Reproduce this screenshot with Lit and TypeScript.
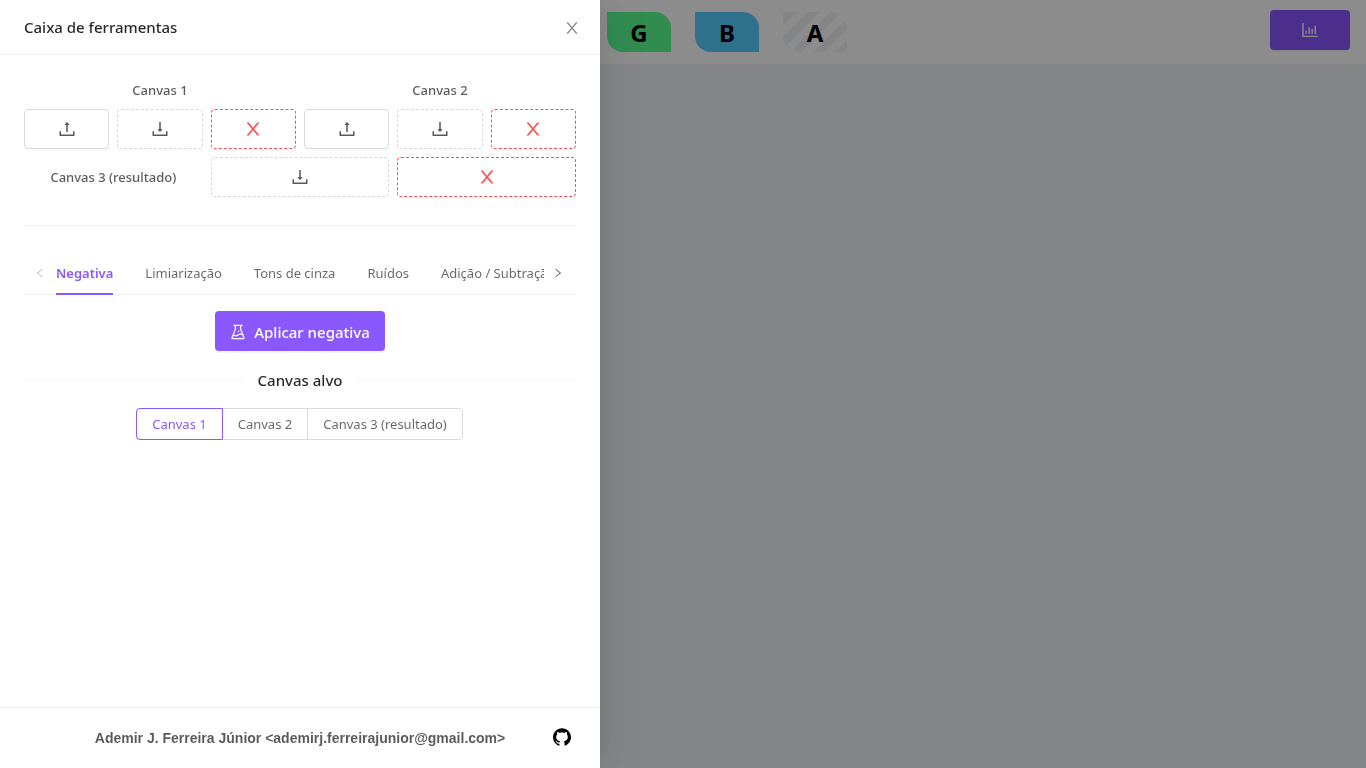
import { LitElement, html, css, svg } from "lit";
import { customElement, property, state } from "lit/decorators.js";
import { classMap } from "lit/directives/class-map.js";

const TRAY =
  "M878 626h-60c-4.4 0-8 3.6-8 8v154H214V634c0-4.4-3.6-8-8-8h-60c-4.4 0-8 3.6-8 8v198c0 17.7 14.3 32 32 32h684c17.7 0 32-14.3 32-32V634c0-4.4-3.6-8-8-8z";

const ICONS: Record<string, string> = {
  upload:
    "M400 317.7h73.9V656c0 4.4 3.6 8 8 8h60c4.4 0 8-3.6 8-8V317.7H624c6.7 0 10.4-7.7 6.3-12.9L518.3 163a8 8 0 00-12.6 0l-112 141.7c-4.1 5.3-.4 13 6.3 13z" + TRAY,
  download:
    "M505.7 661a8 8 0 0012.6 0l112-141.7c4.1-5.2.4-12.9-6.3-12.9h-74.1V168c0-4.4-3.6-8-8-8h-60c-4.4 0-8 3.6-8 8v338.3H400c-6.7 0-10.4 7.7-6.3 12.9l112 141.8z" + TRAY,
  close:
    "M563.8 512l262.5-312.9c4.4-5.2.7-13.1-6.1-13.1h-79.8c-4.7 0-9.2 2.1-12.3 5.7L511.6 449.8 295.1 191.7c-3-3.6-7.5-5.7-12.3-5.7H203c-6.8 0-10.5 7.9-6.1 13.1L459.4 512 196.9 824.9A7.95 7.95 0 00203 838h79.8c4.7 0 9.2-2.1 12.3-5.7l216.5-258.1 216.5 258.1c3 3.6 7.5 5.7 12.3 5.7h79.8c6.8 0 10.5-7.9 6.1-13.1L563.8 512z",
  left:
    "M724 218.3V141c0-6.7-7.7-10.4-12.9-6.3L260.3 486.8a31.86 31.86 0 000 50.3l450.8 352.1c5.3 4.1 12.9.4 12.9-6.3v-77.3c0-4.9-2.3-9.6-6.1-12.6l-360-281 360-281.1c3.8-3 6.1-7.7 6.1-12.6z",
  right:
    "M765.7 486.8L314.9 134.7A7.97 7.97 0 00302 141v77.3c0 4.9 2.3 9.6 6.1 12.6l360 281.1-360 281.1c-3.9 3-6.1 7.7-6.1 12.6V883c0 6.7 7.7 10.4 12.9 6.3l450.8-352.1a31.96 31.96 0 000-50.4z",
  chart:
    "M888 792H200V168c0-4.4-3.6-8-8-8h-56c-4.4 0-8 3.6-8 8v688c0 4.4 3.6 8 8 8h752c4.4 0 8-3.6 8-8v-56c0-4.4-3.6-8-8-8zm-600-80h56c4.4 0 8-3.6 8-8V560c0-4.4-3.6-8-8-8h-56c-4.4 0-8 3.6-8 8v144c0 4.4 3.6 8 8 8zm152 0h56c4.4 0 8-3.6 8-8V384c0-4.4-3.6-8-8-8h-56c-4.4 0-8 3.6-8 8v320c0 4.4 3.6 8 8 8zm152 0h56c4.4 0 8-3.6 8-8V462c0-4.4-3.6-8-8-8h-56c-4.4 0-8 3.6-8 8v242c0 4.4 3.6 8 8 8zm152 0h56c4.4 0 8-3.6 8-8V304c0-4.4-3.6-8-8-8h-56c-4.4 0-8 3.6-8 8v400c0 4.4 3.6 8 8 8z",
  experiment:
    "M512 472a40 40 0 1080 0 40 40 0 10-80 0zm367 352.9L696.3 352V178H768v-68H256v68h71.7v174L145 824.9c-2.8 7.4-4.3 15.2-4.3 23.1 0 35.3 28.7 64 64 64h614.6c7.9 0 15.7-1.5 23.1-4.3 33-12.7 49.4-49.8 36.6-82.8zM395.7 364.7V180h232.6v184.7L719.2 600c-20.7-5.3-42.1-8-63.9-8-61.2 0-119.2 21.5-165.3 60a188.78 188.78 0 01-121.3 43.9c-32.7 0-64.1-8.3-91.8-23.7l118.8-307.5zM210.5 844l41.7-107.8c35.7 18.1 75.4 27.8 116.6 27.8 61.2 0 119.2-21.5 165.3-60 33.9-28.2 76.3-43.9 121.3-43.9 35 0 68.4 9.5 97.6 27.1L813.5 844h-603z",
  github:
    "M511.6 76.3C264.3 76.2 64 276.4 64 523.5 64 718.9 189.3 885 363.8 946c23.5 5.9 19.9-10.8 19.9-22.2v-77.5c-135.7 15.9-141.2-73.9-150.3-88.9C215 726 171.5 718 184.5 703c30.9-15.9 62.4 4 98.9 57.9 26.4 39.1 77.9 32.5 104 26 5.7-23.5 17.9-44.5 34.7-60.8-140.6-25.2-199.2-111-199.2-213 0-49.5 16.3-95 48.3-131.7-20.4-60.5 1.9-112.3 4.9-120 58.1-5.2 118.5 41.6 123.2 45.3 33-8.9 70.7-13.6 112.9-13.6 42.4 0 80.2 4.9 113.5 13.9 11.3-8.6 67.3-48.8 121.3-43.9 2.9 7.7 24.7 58.3 5.5 118 32.4 36.8 48.9 82.7 48.9 132.3 0 102.2-59 188.1-200 212.9a127.5 127.5 0 0138.1 91v112.5c.8 9 0 17.9 15 17.9 177.1-59.7 304.6-227 304.6-424.1 0-247.2-200.4-447.3-447.5-447.3z",
};

@customElement("ui-icon")
export class UiIcon extends LitElement {
  @property() name = "close";

  static styles = css`
    :host {
      display: inline-flex;
    }
    svg {
      width: 1em;
      height: 1em;
      fill: currentColor;
    }
  `;

  render() {
    return html`<svg viewBox="64 64 896 896" aria-hidden="true">${svg`<path d=${ICONS[this.name]}></path>`}</svg>`;
  }
}

const TABS = ["Negativa", "Limiarização", "Tons de cinza", "Ruídos", "Adição / Subtração"];
const CANVASES = ["Canvas 1", "Canvas 2", "Canvas 3 (resultado)"];

@customElement("app-root")
export class AppRoot extends LitElement {
  @state() private tab = 0;
  @state() private target = 0;

  static styles = css`
    :host {
      --primary: #8b57ff;
      --danger: #ff4d4f;
      --text: rgba(0, 0, 0, 0.65);
      --soft: rgba(0, 0, 0, 0.6);
      --heading: rgba(0, 0, 0, 0.85);
      --border: #d9d9d9;
      --split: #f0f0f0;
      display: block;
      min-height: 100vh;
      background: #f0f2f5;
      color: var(--text);
      font: 13px/22px "Noto Sans", "Open Sans", sans-serif;
    }
    * {
      box-sizing: border-box;
    }
    button {
      font: inherit;
      color: inherit;
      cursor: pointer;
      padding: 0;
      margin: 0;
      border: 0;
      background: none;
    }

    .topbar {
      display: grid;
      grid-template-columns: 1fr auto 1fr;
      align-items: center;
      height: 64px;
      padding: 0 16px;
      background: #fff;
    }
    .channels {
      display: flex;
      gap: 24px;
      grid-column: 2;
    }
    .channel {
      width: 64px;
      height: 40px;
      border-radius: 0 16px;
      color: #000;
      font-size: 24px;
      line-height: 42px;
      font-weight: 700;
      text-align: center;
    }
    .red { background: #ff5c5c; }
    .green { background: #5aff92; }
    .blue { background: #57ccff; }
    .alpha {
      background: repeating-linear-gradient(-45deg, #f0f2f5 0 8px, #fff 8px 16px);
    }
    .stats {
      justify-self: end;
      width: 80px;
      height: 40px;
      margin-bottom: 4px;
      border-radius: 4px;
      background: var(--primary);
      color: #fff;
      font-size: 18px;
      display: grid;
      place-items: center;
      box-shadow: 0 2px 0 rgba(0, 0, 0, 0.04);
    }

    .mask {
      position: fixed;
      inset: 0;
      background: rgba(0, 0, 0, 0.45);
    }
    .drawer {
      position: fixed;
      inset: 0 auto 0 0;
      width: 600px;
      max-width: 100%;
      display: flex;
      flex-direction: column;
      background: #fff;
      box-shadow: 6px 0 16px -8px rgba(0, 0, 0, 0.08), 9px 0 28px rgba(0, 0, 0, 0.05),
        12px 0 48px 16px rgba(0, 0, 0, 0.03);
    }
    .head {
      display: flex;
      align-items: center;
      justify-content: space-between;
      padding: 16px 20px 16px 24px;
      border-bottom: 1px solid var(--split);
    }
    .title {
      margin: 0;
      font-size: 15px;
      line-height: 22px;
      font-weight: 500;
      color: var(--heading);
    }
    .close {
      display: flex;
      padding-top: 2px;
      font-size: 16px;
      color: rgba(0, 0, 0, 0.45);
    }
    .body {
      flex: 1;
      overflow: auto;
      padding: 24px;
    }

    .files {
      display: grid;
      grid-template-columns: repeat(6, 1fr);
      gap: 8px;
      align-items: center;
      text-align: center;
      font-weight: 500;
    }
    .group { grid-column: span 3; }
    .wide { grid-column: span 2; }
    .file {
      display: grid;
      place-items: center;
      height: 40px;
      border: 1px solid var(--border);
      border-radius: 4px;
      background: #fff;
      font-size: 18px;
      box-shadow: 0 2px 0 rgba(0, 0, 0, 0.016);
    }
    .dashed { border-style: dashed; }
    .danger {
      border-color: var(--danger);
      color: var(--danger);
    }
    .rule {
      height: 1px;
      margin: 28px 0 24px;
      border: 0;
      background: var(--split);
    }

    .tabs {
      display: flex;
      border-bottom: 1px solid var(--split);
    }
    .arrow {
      flex: 0 0 32px;
      display: flex;
      align-items: center;
      padding: 2px 11px 0;
      font-size: 10px;
    }
    .next { padding-left: 9px; }
    .arrow:disabled { color: rgba(0, 0, 0, 0.25); }
    .tablist {
      flex: 1;
      min-width: 0;
      display: flex;
      gap: 32px;
      overflow: hidden;
      margin-bottom: -1px;
    }
    .tab {
      flex: none;
      padding: 12px 0 9px;
      border-bottom: 2px solid transparent;
      color: var(--soft);
      white-space: nowrap;
    }
    .tab.active {
      border-color: var(--primary);
      color: var(--primary);
      font-weight: 600;
    }

    .panel {
      display: flex;
      flex-direction: column;
      align-items: center;
      gap: 16px;
      padding-top: 16px;
    }
    .apply {
      display: flex;
      align-items: center;
      gap: 8px;
      height: 40px;
      padding: 2px 15px 0;
      border-radius: 4px;
      background: var(--primary);
      color: #fff;
      font-size: 15px;
      line-height: 24px;
      font-weight: 500;
      box-shadow: 0 2px 0 rgba(0, 0, 0, 0.04);
    }
    .apply ui-icon { font-size: 16px; }
    fieldset {
      align-self: stretch;
      display: flex;
      flex-direction: column;
      align-items: center;
      gap: 14px;
      min-width: 0;
      margin: 0;
      padding: 0;
      border: 0;
    }
    .legend {
      align-self: stretch;
      display: flex;
      align-items: center;
      gap: 16px;
      margin: 0;
      font-size: 15px;
      line-height: 27px;
      font-weight: 500;
      color: var(--heading);
    }
    .legend::before,
    .legend::after {
      content: "";
      flex: 1;
      border-top: 1px dashed var(--split);
    }
    .radios {
      display: flex;
    }
    .radio {
      position: relative;
      height: 32px;
      margin-left: -1px;
      padding: 0 15px;
      border: 1px solid var(--border);
      color: var(--soft);
      line-height: 30px;
      cursor: pointer;
    }
    .radio:first-child { border-radius: 4px 0 0 4px; }
    .radio:last-child { border-radius: 0 4px 4px 0; }
    .radio.active {
      z-index: 1;
      border-color: var(--primary);
      color: var(--primary);
    }
    .radio input {
      position: absolute;
      inset: 0;
      margin: 0;
      opacity: 0;
    }

    .foot {
      display: grid;
      grid-template-columns: 28px 1fr 28px;
      align-items: center;
      padding: 19px 24px;
      border-top: 1px solid var(--split);
      font: 700 14px/22px "Liberation Sans", Arial, sans-serif;
      text-align: center;
    }
    .author { grid-column: 2; }
    .github {
      display: grid;
      place-items: center;
      padding-bottom: 2px;
      color: #000;
      font-size: 18px;
      line-height: 18px;
    }
  `;

  private file(kind: "upload" | "download" | "close", canvas: string, wide = false) {
    const labels = { upload: "Abrir", download: "Baixar", close: "Limpar" };
    return html`<button
      type="button"
      class=${classMap({ file: true, dashed: kind !== "upload", danger: kind === "close", wide })}
      aria-label="${labels[kind]} ${canvas}"
    ><ui-icon name=${kind}></ui-icon></button>`;
  }

  render() {
    return html`
      <header class="topbar">
        <div class="channels">
          <div class="channel red">R</div>
          <div class="channel green">G</div>
          <div class="channel blue">B</div>
          <div class="channel alpha">A</div>
        </div>
        <button type="button" class="stats" aria-label="Histograma"><ui-icon name="chart"></ui-icon></button>
      </header>
      <div class="mask"></div>
      <aside class="drawer" role="dialog" aria-labelledby="title">
        <div class="head">
          <h2 class="title" id="title">Caixa de ferramentas</h2>
          <button type="button" class="close" aria-label="Fechar"><ui-icon name="close"></ui-icon></button>
        </div>
        <div class="body">
          <div class="files">
            <div class="group">${CANVASES[0]}</div>
            <div class="group">${CANVASES[1]}</div>
            ${CANVASES.slice(0, 2).map((c) => [this.file("upload", c), this.file("download", c), this.file("close", c)])}
            <div class="wide">${CANVASES[2]}</div>
            ${this.file("download", CANVASES[2], true)} ${this.file("close", CANVASES[2], true)}
          </div>
          <hr class="rule" />
          <div class="tabs">
            <button type="button" class="arrow" aria-label="Anterior" disabled><ui-icon name="left"></ui-icon></button>
            <div class="tablist" role="tablist">
              ${TABS.map(
                (t, i) => html`<button
                  type="button"
                  role="tab"
                  aria-selected=${i === this.tab}
                  class=${classMap({ tab: true, active: i === this.tab })}
                  @click=${() => (this.tab = i)}
                >${t}</button>`
              )}
            </div>
            <button type="button" class="arrow next" aria-label="Próximo"><ui-icon name="right"></ui-icon></button>
          </div>
          <div class="panel" role="tabpanel">
            <button type="button" class="apply"><ui-icon name="experiment"></ui-icon>Aplicar negativa</button>
            <fieldset aria-labelledby="target">
              <h3 class="legend" id="target">Canvas alvo</h3>
              <div class="radios">
                ${CANVASES.map(
                  (c, i) => html`<label class=${classMap({ radio: true, active: i === this.target })}
                    ><input type="radio" name="target" .checked=${i === this.target} @change=${() => (this.target = i)} />${c}</label
                  >`
                )}
              </div>
            </fieldset>
          </div>
        </div>
        <footer class="foot">
          <span class="author">Ademir J. Ferreira Júnior &lt;ademirj.ferreirajunior@gmail.com&gt;</span>
          <a class="github" href="#" aria-label="GitHub"><ui-icon name="github"></ui-icon></a>
        </footer>
      </aside>
    `;
  }
}
